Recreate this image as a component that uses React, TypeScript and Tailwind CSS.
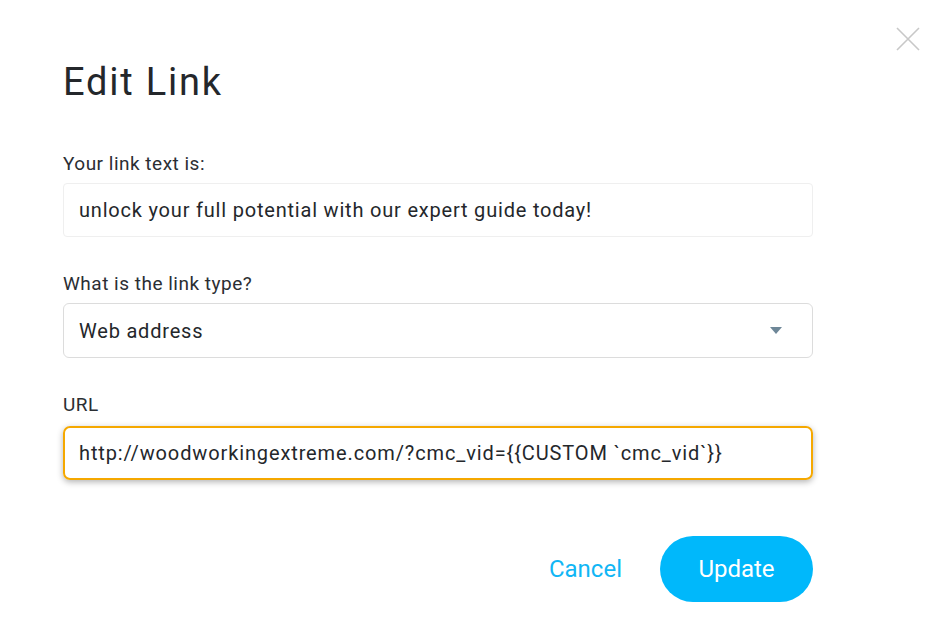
import React from "react";

export default function App() {
  return (
    <div className="relative w-[936px] h-[624px] bg-white overflow-hidden" style={{ fontFamily: "Roboto, 'Liberation Sans', sans-serif" }}>
      <button className="absolute left-[896px] top-[27px] w-[24px] h-[24px] text-[#c8c8c8]">
        <svg width="24" height="24" viewBox="0 0 24 24" fill="none" stroke="currentColor" strokeWidth="1.6">
          <path d="M1 1 L23 23 M23 1 L1 23" />
        </svg>
      </button>
      <div className="pl-[63px] pt-[58px] w-[813px] flex flex-col">
        <h1 className="text-[38px] leading-[48px] text-[#24272b] tracking-[1.8px]">Edit Link</h1>
        <label className="mt-[46px] text-[19px] leading-[24px] text-[#2b2e33] tracking-[0.5px]">Your link text is:</label>
        <div className="mt-[7px] h-[54px] border border-[#efefef] rounded-[4px] flex items-center px-[15px] text-[20px] text-[#24272b] tracking-[0.8px]">
          unlock your full potential with our expert guide today!
        </div>
        <label className="mt-[35px] text-[19px] leading-[24px] text-[#2b2e33] tracking-[0.5px]">What is the link type?</label>
        <div className="mt-[7px] h-[55px] border border-[#dcdcdc] rounded-[6px] flex items-center justify-between pl-[15px] pr-[30px] text-[20px] text-[#24272b] tracking-[0.8px]">
          <span>Web address</span>
          <svg width="12" height="7" viewBox="0 0 12 7"><path d="M0 0 H12 L6 7 Z" fill="#6e8798" /></svg>
        </div>
        <label className="mt-[35px] text-[19px] leading-[24px] text-[#2b2e33] tracking-[0.5px]">URL</label>
        <div className="mt-[9px] h-[54px] border-2 border-[#f5a800] rounded-[7px] shadow-[0_2px_6px_rgba(0,0,0,0.3)] flex items-center px-[14px] text-[20px] text-[#24272b] tracking-[0.88px]">
          {"http://woodworkingextreme.com/?cmc_vid={{CUSTOM `cmc_vid`}}"}
        </div>
        <div className="mt-[56px] flex justify-end items-center gap-[38px]">
          <button className="text-[24px] text-[#11b6f5]">Cancel</button>
          <button className="w-[153px] h-[66px] rounded-full bg-[#00b8fb] text-white text-[24px]">Update</button>
        </div>
      </div>
    </div>
  );
}
